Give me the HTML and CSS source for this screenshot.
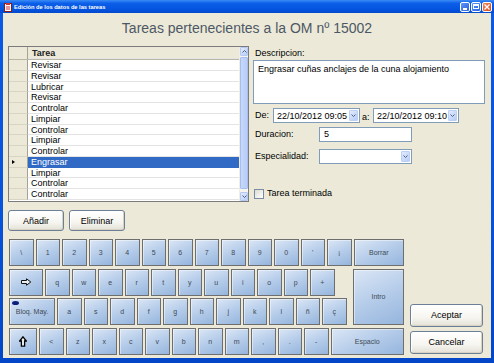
FILE: index.html
```html
<!DOCTYPE html>
<html lang="es">
<head>
<meta charset="utf-8">
<title>Edición de los datos de las tareas</title>
<link rel="stylesheet" href="styles.css">
</head>
<body>
<div class="window">
  <div class="titlebar">
    <svg class="app-icon" width="8" height="9" viewBox="0 0 8 9"><rect x="0.5" y="0.5" width="7" height="8" fill="#fff" stroke="#8a1a1a"/><rect x="2" y="0" width="4" height="2" fill="#c33"/><path d="M2 4h4M2 6h4" stroke="#c33"/></svg>
    <span class="title">Edición de los datos de las tareas</span>
    <div class="tb-buttons">
      <span class="tb-btn"><span class="glyph-min"></span></span>
      <span class="tb-btn"><span class="glyph-max"></span></span>
      <span class="tb-btn close"><svg width="6" height="6" viewBox="0 0 6 6"><path d="M0.5 0.5L5.5 5.5M5.5 0.5L0.5 5.5" stroke="#fff" stroke-width="1.3"/></svg></span>
    </div>
  </div>
  <div class="client">
    <h1 class="heading">Tareas pertenecientes a la OM nº 15002</h1>
    <div class="main">
      <div class="grid">
        <div class="grid-body">
          <div class="grid-head"><div class="rh"></div><div class="cell">Tarea</div></div>
          <div class="grid-row"><div class="rh"></div><div class="cell">Revisar</div></div>
          <div class="grid-row"><div class="rh"></div><div class="cell">Revisar</div></div>
          <div class="grid-row"><div class="rh"></div><div class="cell">Lubricar</div></div>
          <div class="grid-row"><div class="rh"></div><div class="cell">Revisar</div></div>
          <div class="grid-row"><div class="rh"></div><div class="cell">Controlar</div></div>
          <div class="grid-row"><div class="rh"></div><div class="cell">Limpiar</div></div>
          <div class="grid-row"><div class="rh"></div><div class="cell">Controlar</div></div>
          <div class="grid-row"><div class="rh"></div><div class="cell">Limpiar</div></div>
          <div class="grid-row"><div class="rh"></div><div class="cell">Controlar</div></div>
          <div class="grid-row selected"><div class="rh"><span class="marker"></span></div><div class="cell">Engrasar</div></div>
          <div class="grid-row"><div class="rh"></div><div class="cell">Limpiar</div></div>
          <div class="grid-row"><div class="rh"></div><div class="cell">Controlar</div></div>
          <div class="grid-row"><div class="rh"></div><div class="cell">Controlar</div></div>
        </div>
        <div class="vscroll">
          <div class="sb-btn"><svg width="5" height="3" viewBox="0 0 5 3"><path d="M0.5 2.5L2.5 0.5L4.5 2.5" fill="none" stroke="#4d6185" stroke-width="1"/></svg></div>
          <div class="sb-thumb"></div>
          <div class="sb-btn"><svg width="5" height="3" viewBox="0 0 5 3"><path d="M0.5 0.5L2.5 2.5L4.5 0.5" fill="none" stroke="#4d6185" stroke-width="1"/></svg></div>
        </div>
      </div>
      <div class="form">
        <div class="label">Descripcion:</div>
        <div class="textarea">Engrasar cuñas anclajes de la cuna alojamiento</div>
        <div class="row dates">
          <span class="label de">De:</span>
          <div class="picker"><span class="pv">22/10/2012 09:05</span><span class="dd"><svg width="5" height="3" viewBox="0 0 5 3"><path d="M0.5 0.5L2.5 2.5L4.5 0.5" fill="none" stroke="#4d6185"/></svg></span></div>
          <span class="label a">a:</span>
          <div class="picker"><span class="pv">22/10/2012 09:10</span><span class="dd"><svg width="5" height="3" viewBox="0 0 5 3"><path d="M0.5 0.5L2.5 2.5L4.5 0.5" fill="none" stroke="#4d6185"/></svg></span></div>
        </div>
        <div class="row field">
          <span class="label fl">Duracion:</span>
          <div class="input">5</div>
        </div>
        <div class="row field esp">
          <span class="label fl">Especialidad:</span>
          <div class="input combo"><span class="dd"><svg width="5" height="3" viewBox="0 0 5 3"><path d="M0.5 0.5L2.5 2.5L4.5 0.5" fill="none" stroke="#4d6185"/></svg></span></div>
        </div>
        <div class="row check">
          <span class="checkbox"></span>
          <span class="label">Tarea terminada</span>
        </div>
      </div>
    </div>
    <div class="actions">
      <button class="btn small">Añadir</button>
      <button class="btn small">Eliminar</button>
    </div>
    <div class="bottom">
      <div class="keyboard">
        <div class="krow">
          <div class="key">\</div><div class="key">1</div><div class="key">2</div><div class="key">3</div><div class="key">4</div><div class="key">5</div><div class="key">6</div><div class="key">7</div><div class="key">8</div><div class="key">9</div><div class="key">0</div><div class="key">'</div><div class="key">¡</div>
          <div class="key wide borrar">Borrar</div>
        </div>
        <div class="kmid">
          <div class="kleft">
            <div class="krow">
              <div class="key tab"><svg width="11" height="8" viewBox="0 0 11 8"><path d="M0.5 2.5H5.5V0.8L9.8 4L5.5 7.2V5.5H0.5Z" fill="#e9eef5" stroke="#111" stroke-width="1"/></svg></div>
              <div class="key">q</div><div class="key">w</div><div class="key">e</div><div class="key">r</div><div class="key">t</div><div class="key">y</div><div class="key">u</div><div class="key">i</div><div class="key">o</div><div class="key">p</div><div class="key">+</div>
            </div>
            <div class="krow">
              <div class="key caps"><span class="led"></span>Bloq. May.</div>
              <div class="key">a</div><div class="key">s</div><div class="key">d</div><div class="key">f</div><div class="key">g</div><div class="key">h</div><div class="key">j</div><div class="key">k</div><div class="key">l</div><div class="key">ñ</div><div class="key">ç</div>
            </div>
          </div>
          <div class="key intro">Intro</div>
        </div>
        <div class="krow">
          <div class="key shift"><svg width="8" height="11" viewBox="0 0 8 11"><path d="M4 0.8L7.3 5H5.6V10.2H2.4V5H0.7Z" fill="#f2f4f8" stroke="#000" stroke-width="1.3" stroke-linejoin="miter"/></svg></div>
          <div class="key">&lt;</div><div class="key">z</div><div class="key">x</div><div class="key">c</div><div class="key">v</div><div class="key">b</div><div class="key">n</div><div class="key">m</div><div class="key">,</div><div class="key">.</div><div class="key">-</div>
          <div class="key space">Espacio</div>
        </div>
      </div>
      <div class="dialog-buttons">
        <button class="btn dlg">Aceptar</button>
        <button class="btn dlg">Cancelar</button>
      </div>
    </div>
  </div>
</div>
</body>
</html>
```
FILE: styles.css
```css
* { box-sizing: border-box; margin: 0; padding: 0; }
html, body { margin: 0; width: 494px; height: 363px; overflow: hidden; background: #ece9d8; }
body { font-family: "Liberation Sans", Arial, sans-serif; font-size: 9px; color: #000; }

.window {
  width: 494px; height: 363px;
  display: flex; flex-direction: column;
  background: linear-gradient(to bottom, #0a5ae8 0%, #0552dc 60%, #0346c8 100%);
  padding: 0 3px 5px 3px;
}
.titlebar {
  height: 13px; flex: none;
  display: flex; align-items: center;
  margin: 0 -3px; padding: 0 2px 0 4px;
  background: linear-gradient(to bottom, #3b8cf6 0%, #0c5fe8 25%, #0454e0 70%, #0349cc 100%);
}
.app-icon { flex: none; margin-top: 1px; }
.title {
  margin-left: 2px; color: #fff; font-weight: bold; font-size: 5.7px; line-height: 8px;
  font-family: "Liberation Sans", Arial, sans-serif;
}
.tb-buttons { margin-left: auto; display: flex; gap: 1px; }
.tb-btn {
  width: 10px; height: 10px; border: 1px solid #fff; border-radius: 2px;
  background: linear-gradient(135deg, #5c95f7, #2a63e0);
  display: flex; align-items: center; justify-content: center; position: relative;
}
.tb-btn.close { background: linear-gradient(135deg, #f08a64, #d6481a); }
.glyph-min { width: 4px; height: 2px; background: #fff; margin-top: 4px; margin-right: 1px; }
.glyph-max { width: 6px; height: 5px; border: 1px solid #fff; border-top-width: 2px; }

.client {
  flex: 1; background: #ece9d8;
  padding: 7px 0 0 5px;
}
.heading {
  font-weight: normal; font-size: 14px; line-height: 16px; height: 16px;
  color: #4d5866; text-align: center; margin-left: -5px;
}

.main { display: flex; margin-top: 10px; height: 156px; }

/* data grid */
.grid {
  width: 241px; height: 156px; flex: none;
  border: 1px solid #7c7c7c; background: #fff;
  display: flex;
}
.grid-body { flex: 1; display: flex; flex-direction: column; }
.grid-head { display: flex; height: 13px; background: #ece9d8; border-bottom: 1px solid #b9b6a4; }
.grid-head .cell { padding-left: 4px; line-height: 13px; font-weight: bold; color: #222; }
.grid-row { display: flex; height: 10.75px; }
.rh {
  width: 19px; flex: none; background: #ece9d8;
  border-right: 1px solid #a5a294; border-bottom: 1px solid #d8d5c4;
  display: flex; align-items: center; padding-left: 3px;
}
.grid-head .rh { border-bottom: none; }
.cell { flex: 1; padding-left: 3px; line-height: 10.5px; border-bottom: 1px solid #e4e4e4; white-space: nowrap; }
.grid-row.selected .cell { background: #316ac5; color: #fff; border-bottom-color: #316ac5; }
.marker { width: 0; height: 0; border-left: 3px solid #000; border-top: 2.5px solid transparent; border-bottom: 2.5px solid transparent; }

.vscroll {
  width: 9px; flex: none; background: #f5f4ef;
  display: flex; flex-direction: column; border-left: 1px solid #eeede6;
}
.sb-btn {
  height: 9px; flex: none;
  background: linear-gradient(135deg, #e3ebfd, #b8cdf6);
  border: 1px solid #b4c8f2; border-radius: 1px;
  display: flex; align-items: center; justify-content: center;
}
.sb-thumb {
  flex: 1; margin: 1px 0 3px;
  background: linear-gradient(to right, #c7d7fb, #b9cdf8);
  border: 1px solid #a7bff0; border-radius: 1px;
}

/* form */
.form { margin-left: 4px; width: 232px; padding-top: 2px; }
.label { line-height: 11px; color: #000; white-space: nowrap; }
.form > .label { padding-left: 2px; }
.textarea {
  margin-top: 1px; height: 44px;
  border: 1px solid #7f9db9; background: #fff;
  padding: 3px 4px; line-height: 11px;
}
.row { display: flex; align-items: center; }
.dates { margin-top: 4px; height: 15px; }
.label.de { padding-left: 2px; width: 20px; flex: none; }
.label.a { padding-left: 2px; width: 13px; margin-top: 3px; flex: none; }
.picker {
  height: 15px; width: 87px; flex: none;
  border: 1px solid #7f9db9; background: #fff;
  display: flex; align-items: center; justify-content: space-between;
  padding: 0 1px 0 3px; font-size: 9px;
}
.pv { white-space: nowrap; }
.picker + .label.a + .picker { width: 86px; }
.dd {
  width: 9px; height: 11px; flex: none;
  background: linear-gradient(135deg, #e3ebfd, #b7ccf6);
  border: 1px solid #bccff5; border-radius: 1px;
  display: flex; align-items: center; justify-content: center;
}
.field { margin-top: 4px; height: 15px; }
.field.esp { margin-top: 7px; }
.label.fl { width: 66px; padding-left: 2px; flex: none; }
.input {
  width: 93px; height: 15px;
  border: 1px solid #7f9db9; background: #fff;
  padding-left: 4px; line-height: 13px;
}
.combo { display: flex; justify-content: flex-end; align-items: center; padding-right: 1px; }
.check { margin-top: 24px; }
.checkbox {
  width: 10px; height: 10px; border: 1px solid #7a8ca0;
  background: linear-gradient(135deg, #dcdcd4, #fff);
  margin-left: 1px; margin-right: 3px;
}

/* buttons */
.btn {
  font-family: "Liberation Sans", Arial, sans-serif; font-size: 9px; color: #000;
  border: 1px solid #6d7f96; border-radius: 3px;
  background: linear-gradient(to bottom, #ffffff 0%, #f6f5f0 60%, #e3e1d6 100%);
  box-shadow: inset -1px -1px 0 #d6d3c4, inset 1px 1px 0 #fff;
}
.actions { display: flex; gap: 5px; margin-top: 8px; }
.btn.small { width: 56px; height: 21px; }

.bottom { display: flex; align-items: flex-end; margin-top: 8px; }
.keyboard { width: 395px; margin-left: 1px; display: flex; flex-direction: column; gap: 2.5px; }
.krow { display: flex; gap: 2px; }
.key {
  width: 24.5px; height: 27px; flex: none;
  border: 1px solid #6e6e6e;
  background: linear-gradient(155deg, #dbe6f5 0%, #b9cfeb 45%, #95b5dd 100%);
  box-shadow: inset 1px 1px 0 rgba(255,255,255,0.45);
  display: flex; align-items: center; justify-content: center;
  font-size: 7px; color: #404a55; position: relative;
}
.key.borrar { flex: 1; }
.kmid { display: flex; justify-content: space-between; }
.kleft { display: flex; flex-direction: column; gap: 2.5px; }
.key.tab { width: 34px; }
.key.caps { width: 46px; }
.key.shift { width: 28px; }
.key.intro { width: 51px; height: 56.5px; }
.key.space { flex: 1; }
.led {
  position: absolute; left: 2px; top: 2px;
  width: 7px; height: 4px; border-radius: 50%; background: #0b1f7c;
}

.dialog-buttons { margin-left: 6px; margin-bottom: 1px; display: flex; flex-direction: column; gap: 4px; }
.btn.dlg { width: 73px; height: 23px; }
```
